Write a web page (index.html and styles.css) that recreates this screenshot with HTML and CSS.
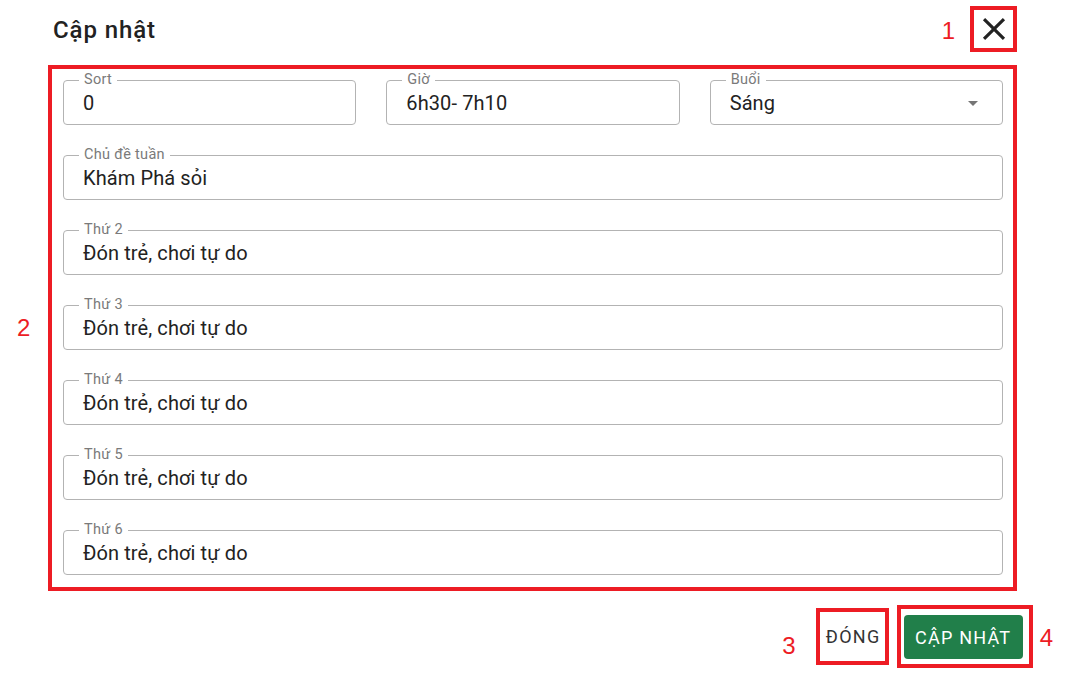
FILE: index.html
```html
<!DOCTYPE html>
<html lang="vi">
<head>
<meta charset="utf-8">
<title>Cập nhật</title>
<link rel="stylesheet" href="styles.css">
</head>
<body>
<div class="dialog">
  <header class="head">
    <h2 class="title">Cập nhật</h2>
    <span class="mark mark-1">1</span>
    <div class="anno anno-close">
      <button class="close" aria-label="close">
        <svg viewBox="0 0 24 24" width="38" height="38"><path d="M19 6.41 17.59 5 12 10.59 6.41 5 5 6.41 10.59 12 5 17.59 6.41 19 12 13.41 17.59 19 19 17.59 13.41 12z" fill="#222"/></svg>
      </button>
    </div>
  </header>

  <main class="main">
    <span class="mark mark-2">2</span>
    <div class="anno anno-form">
      <div class="row3">
        <div class="field"><span class="label">Sort</span><span class="value">0</span></div>
        <div class="field"><span class="label">Giờ</span><span class="value">6h30- 7h10</span></div>
        <div class="field select"><span class="label">Buổi</span><span class="value">Sáng</span>
          <svg class="arrow" viewBox="0 0 24 24" width="24" height="24"><path d="M7 10l5 5 5-5z" fill="#757575"/></svg>
        </div>
      </div>
      <div class="field"><span class="label">Chủ đề tuần</span><span class="value">Khám Phá sỏi</span></div>
      <div class="field"><span class="label">Thứ 2</span><span class="value">Đón trẻ, chơi tự do</span></div>
      <div class="field"><span class="label">Thứ 3</span><span class="value">Đón trẻ, chơi tự do</span></div>
      <div class="field"><span class="label">Thứ 4</span><span class="value">Đón trẻ, chơi tự do</span></div>
      <div class="field"><span class="label">Thứ 5</span><span class="value">Đón trẻ, chơi tự do</span></div>
      <div class="field"><span class="label">Thứ 6</span><span class="value">Đón trẻ, chơi tự do</span></div>
    </div>
  </main>

  <footer class="actions">
    <span class="mark mark-3">3</span>
    <div class="anno anno-close-btn"><button class="btn-text">ĐÓNG</button></div>
    <div class="anno anno-submit"><button class="btn-green">CẬP NHẬT</button></div>
    <span class="mark mark-4">4</span>
  </footer>
</div>
</body>
</html>
```

FILE: styles.css
```css
* { box-sizing: border-box; }
html, body { margin: 0; padding: 0; background: #fff; }
body {
  font-family: Roboto, "Noto Sans", "Liberation Sans", sans-serif;
  color: #212121;
  width: 1074px;
  height: 691px;
  overflow: hidden;
}

.anno { border: 4px solid #ed1c24; }

.mark {
  font-family: "Liberation Sans", Arial, sans-serif;
  font-size: 24px;
  line-height: 24px;
  color: #ed1c24;
}

/* header */
.head {
  display: flex;
  align-items: flex-start;
  height: 65px;
  padding-left: 53px;
  padding-right: 57px;
}
.title {
  margin: 16px 0 0;
  font-size: 24px;
  line-height: 28px;
  font-weight: 500;
  letter-spacing: 0.9px;
  color: #222;
  flex: 1;
}
.mark-1 { margin-top: 19px; margin-right: 15px; }
.anno-close {
  margin-top: 6px;
  width: 47px;
  height: 46px;
  display: flex;
  align-items: center;
  justify-content: center;
}
.close {
  border: 0;
  background: none;
  padding: 0;
  width: 38px;
  height: 38px;
  display: flex;
  align-items: center;
  justify-content: center;
}

/* main */
.main {
  display: flex;
  align-items: center;
  padding-left: 17px;
}
.mark-2 { width: 31px; }
.anno-form {
  width: 969px;
  padding: 11px 10px 12px 11px;
  display: flex;
  flex-direction: column;
  gap: 30px;
}
.row3 {
  display: grid;
  grid-template-columns: 1fr 1fr 1fr;
  gap: 30px;
}
.field {
  position: relative;
  height: 45px;
  border: 1px solid #b3b3b3;
  border-radius: 4px;
  display: flex;
  align-items: center;
  padding-left: 19px;
}
.label {
  position: absolute;
  left: 15px;
  top: -10px;
  padding: 0 5px;
  background: #fff;
  font-size: 14.5px;
  line-height: 18px;
  letter-spacing: 0.3px;
  color: #7a7a7a;
}
.value {
  font-size: 20px;
  line-height: 24px;
  letter-spacing: 0.1px;
  color: #222;
  padding-top: 1px;
}
.select .arrow {
  position: absolute;
  right: 17px;
  top: 10px;
}

/* actions */
.actions {
  display: flex;
  justify-content: flex-end;
  align-items: flex-start;
  margin-top: 14px;
  padding-right: 21px;
}
.mark-3 { margin-top: 29px; margin-right: 20px; }
.anno-close-btn {
  margin-top: 3px;
  width: 73px;
  height: 57px;
  display: flex;
  align-items: center;
  justify-content: center;
}
.btn-text {
  border: 0;
  background: none;
  padding: 0;
  font-family: Roboto, "Noto Sans", sans-serif;
  font-size: 18px;
  font-weight: 400;
  letter-spacing: 1.3px;
  color: #333;
  margin-left: 2px;
}
.anno-submit {
  margin-left: 8px;
  width: 136px;
  height: 63px;
  padding: 6px 6px 5px 3px;
}
.btn-green {
  width: 119px;
  height: 44px;
  border: 0;
  border-radius: 4px;
  background: #217f4a;
  color: #fff;
  font-family: Roboto, "Noto Sans", sans-serif;
  font-size: 18px;
  font-weight: 400;
  letter-spacing: 1.2px;
  padding: 0;
}
.mark-4 { margin-top: 21px; margin-left: 7px; }
```
